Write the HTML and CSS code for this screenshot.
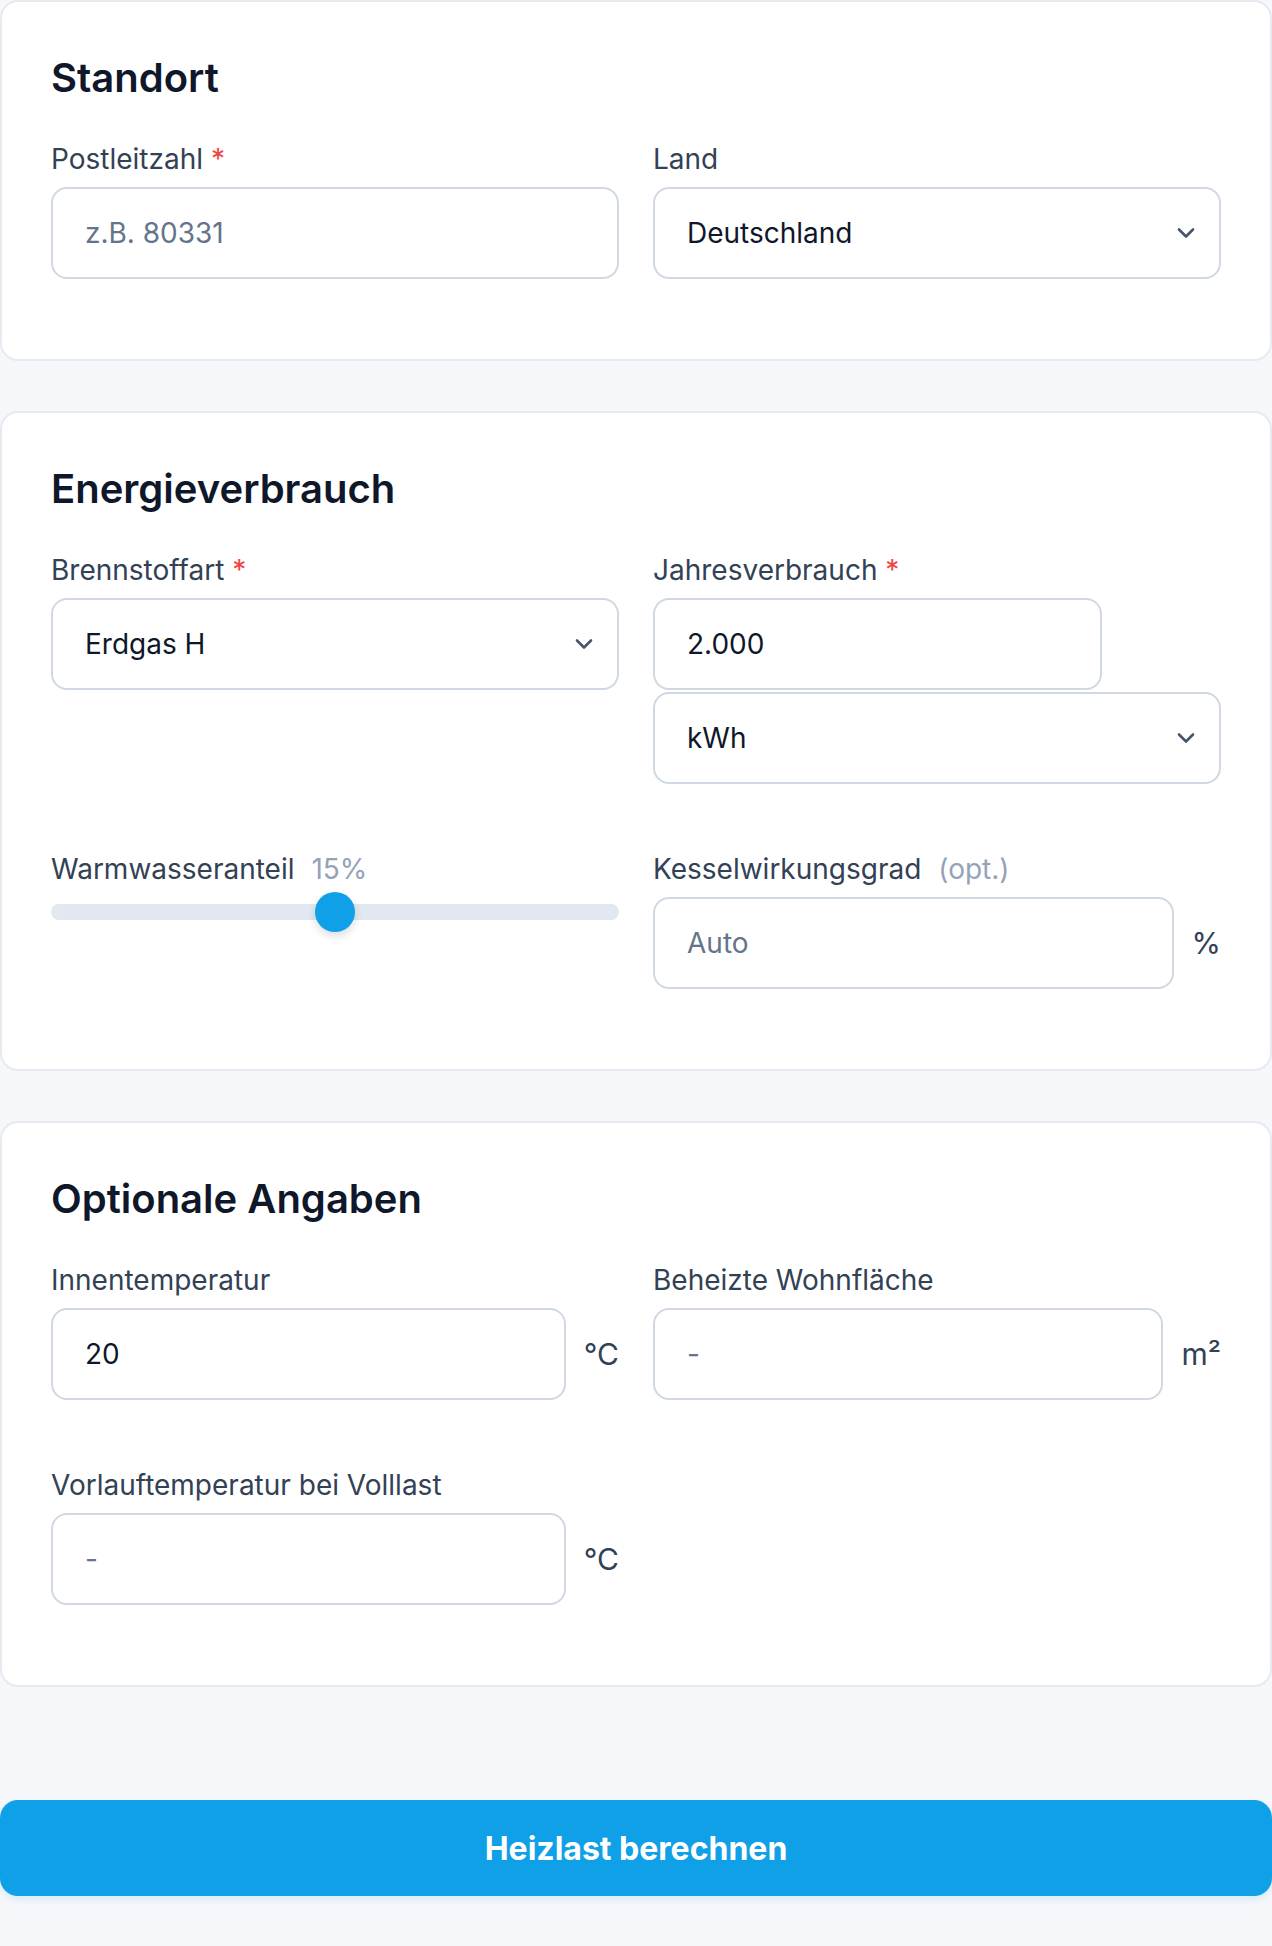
FILE: index.html
```html
<!DOCTYPE html>
<html lang="de">
<head>
    <meta charset="UTF-8">
    <meta name="viewport" content="width=device-width, initial-scale=1.0">
    <title>Heizlast berechnen</title>
    <link rel="stylesheet" href="styles.css">
</head>
<body>

    <main>
        <form id="heatForm" class="calc-form">

            <!-- Standort -->
            <section class="card">
                <h2>Standort</h2>
                <div class="grid">
                    <div class="field">
                        <label for="plz">Postleitzahl <span class="req">*</span></label>
                        <input id="plz" class="control" type="text" inputmode="numeric" placeholder="z.B. 80331">
                    </div>
                    <div class="field">
                        <label for="land">Land</label>
                        <div class="select-wrap">
                            <select id="land" class="control">
                                <option>Deutschland</option>
                                <option>Österreich</option>
                                <option>Schweiz</option>
                            </select>
                            <svg class="chevron" width="18" height="11" viewBox="0 0 18 11"><polyline points="2,2 9,9 16,2"/></svg>
                        </div>
                    </div>
                </div>
            </section>

            <!-- Energieverbrauch -->
            <section class="card">
                <h2>Energieverbrauch</h2>
                <div class="grid">
                    <div class="field">
                        <label for="fuel">Brennstoffart <span class="req">*</span></label>
                        <div class="select-wrap">
                            <select id="fuel" class="control">
                                <option>Erdgas H</option>
                                <option>Erdgas L</option>
                                <option>Heizöl</option>
                                <option>Flüssiggas</option>
                            </select>
                            <svg class="chevron" width="18" height="11" viewBox="0 0 18 11"><polyline points="2,2 9,9 16,2"/></svg>
                        </div>
                    </div>
                    <div class="field">
                        <label for="amount">Jahresverbrauch <span class="req">*</span></label>
                        <div class="stack">
                            <input id="amount" class="control amount" type="text" inputmode="decimal" value="2.000">
                            <div class="select-wrap">
                                <select id="unit" class="control">
                                    <option>kWh</option>
                                    <option>m³</option>
                                    <option>Liter</option>
                                </select>
                                <svg class="chevron" width="18" height="11" viewBox="0 0 18 11"><polyline points="2,2 9,9 16,2"/></svg>
                            </div>
                        </div>
                    </div>
                    <div class="field">
                        <label for="water" class="tight">Warmwasseranteil <span class="hint" id="waterValue">15%</span></label>
                        <input id="water" class="range" type="range" min="0" max="30" value="15">
                    </div>
                    <div class="field">
                        <label for="eff">Kesselwirkungsgrad <span class="hint">(opt.)</span></label>
                        <div class="with-unit">
                            <input id="eff" class="control" type="text" inputmode="decimal" placeholder="Auto">
                            <span class="unit">%</span>
                        </div>
                    </div>
                </div>
            </section>

            <!-- Optionale Angaben -->
            <section class="card">
                <h2>Optionale Angaben</h2>
                <div class="grid">
                    <div class="field">
                        <label for="tin">Innentemperatur</label>
                        <div class="with-unit">
                            <input id="tin" class="control" type="text" inputmode="decimal" value="20">
                            <span class="unit">°C</span>
                        </div>
                    </div>
                    <div class="field">
                        <label for="area">Beheizte Wohnfläche</label>
                        <div class="with-unit">
                            <input id="area" class="control" type="text" inputmode="decimal" placeholder="-">
                            <span class="unit">m²</span>
                        </div>
                    </div>
                    <div class="field">
                        <label for="flow">Vorlauftemperatur bei Volllast</label>
                        <div class="with-unit">
                            <input id="flow" class="control" type="text" inputmode="decimal" placeholder="-">
                            <span class="unit">°C</span>
                        </div>
                    </div>
                </div>
            </section>

            <button type="button" class="submit">Heizlast berechnen</button>
        </form>
    </main>

    <script>
        const water = document.getElementById('water');
        water.addEventListener('input', function () {
            document.getElementById('waterValue').innerText = water.value + '%';
        });
    </script>
</body>
</html>
```

FILE: styles.css
```css
body {
    font-family: Inter, "Noto Sans", Arial, sans-serif;
    margin: 0;
    padding: 0;
    background-color: #f5f7fa;
    color: #0f172a;
}
main {
    padding: 0 0 50px;
}
.card {
    background-color: #fff;
    border: 2px solid #e7ebf1;
    border-radius: 18px;
    padding: 48px 49px 80px;
    margin-bottom: 50px;
}
.card h2 {
    margin: 0 0 32px;
    font-size: 40px;
    line-height: 56px;
    font-weight: 600;
    color: #0f172a;
}
.grid {
    display: grid;
    grid-template-columns: 1fr 1fr;
    column-gap: 34px;
    row-gap: 64px;
}
.field label {
    display: block;
    margin-bottom: 7px;
    font-size: 28px;
    line-height: 42px;
    font-weight: 400;
    color: #334155;
}
.field label.tight {
    margin-bottom: 2px;
}
.req {
    color: #ef4444;
}
.hint {
    margin-left: 9px;
    color: #94a3b8;
}
.control {
    display: block;
    box-sizing: border-box;
    width: 100%;
    height: 92px;
    margin: 0;
    padding: 0 32px;
    border: 2px solid #cfd8e3;
    border-radius: 16px;
    background-color: #fff;
    font-family: inherit;
    font-size: 28px;
    color: #0f172a;
    outline: none;
}
.control::placeholder {
    color: #64748b;
}
select.control {
    -webkit-appearance: none;
    appearance: none;
    padding-right: 70px;
}
.select-wrap {
    position: relative;
}
.chevron {
    position: absolute;
    right: 26px;
    top: 50%;
    transform: translateY(-50%);
    pointer-events: none;
}
.chevron polyline {
    fill: none;
    stroke: #475569;
    stroke-width: 2.6;
    stroke-linecap: round;
    stroke-linejoin: round;
}
.stack {
    display: flex;
    flex-direction: column;
    gap: 2px;
}
.control.amount {
    width: 79%;
}
.with-unit {
    display: flex;
    align-items: center;
    gap: 18px;
}
.with-unit .control {
    flex: 1;
    min-width: 0;
}
.unit {
    font-size: 30px;
    color: #334155;
}
.range {
    -webkit-appearance: none;
    appearance: none;
    display: block;
    width: 100%;
    height: 40px;
    margin: 0;
    background: transparent;
}
.range::-webkit-slider-runnable-track {
    height: 16px;
    border-radius: 8px;
    background-color: #e2e8f0;
}
.range::-webkit-slider-thumb {
    -webkit-appearance: none;
    width: 40px;
    height: 40px;
    margin-top: -12px;
    border: none;
    border-radius: 50%;
    background-color: #0fa0e7;
    box-shadow: 0 4px 8px rgba(15, 23, 42, 0.15);
    cursor: pointer;
}
.submit {
    display: block;
    width: 100%;
    height: 96px;
    margin-top: 113px;
    border: none;
    border-radius: 18px;
    background-color: #0fa0e7;
    box-shadow: 0 4px 6px rgba(14, 165, 233, 0.12);
    color: #fff;
    font-family: inherit;
    font-size: 32px;
    font-weight: 700;
    cursor: pointer;
}
.submit:hover {
    background-color: #0b91d3;
}
```
